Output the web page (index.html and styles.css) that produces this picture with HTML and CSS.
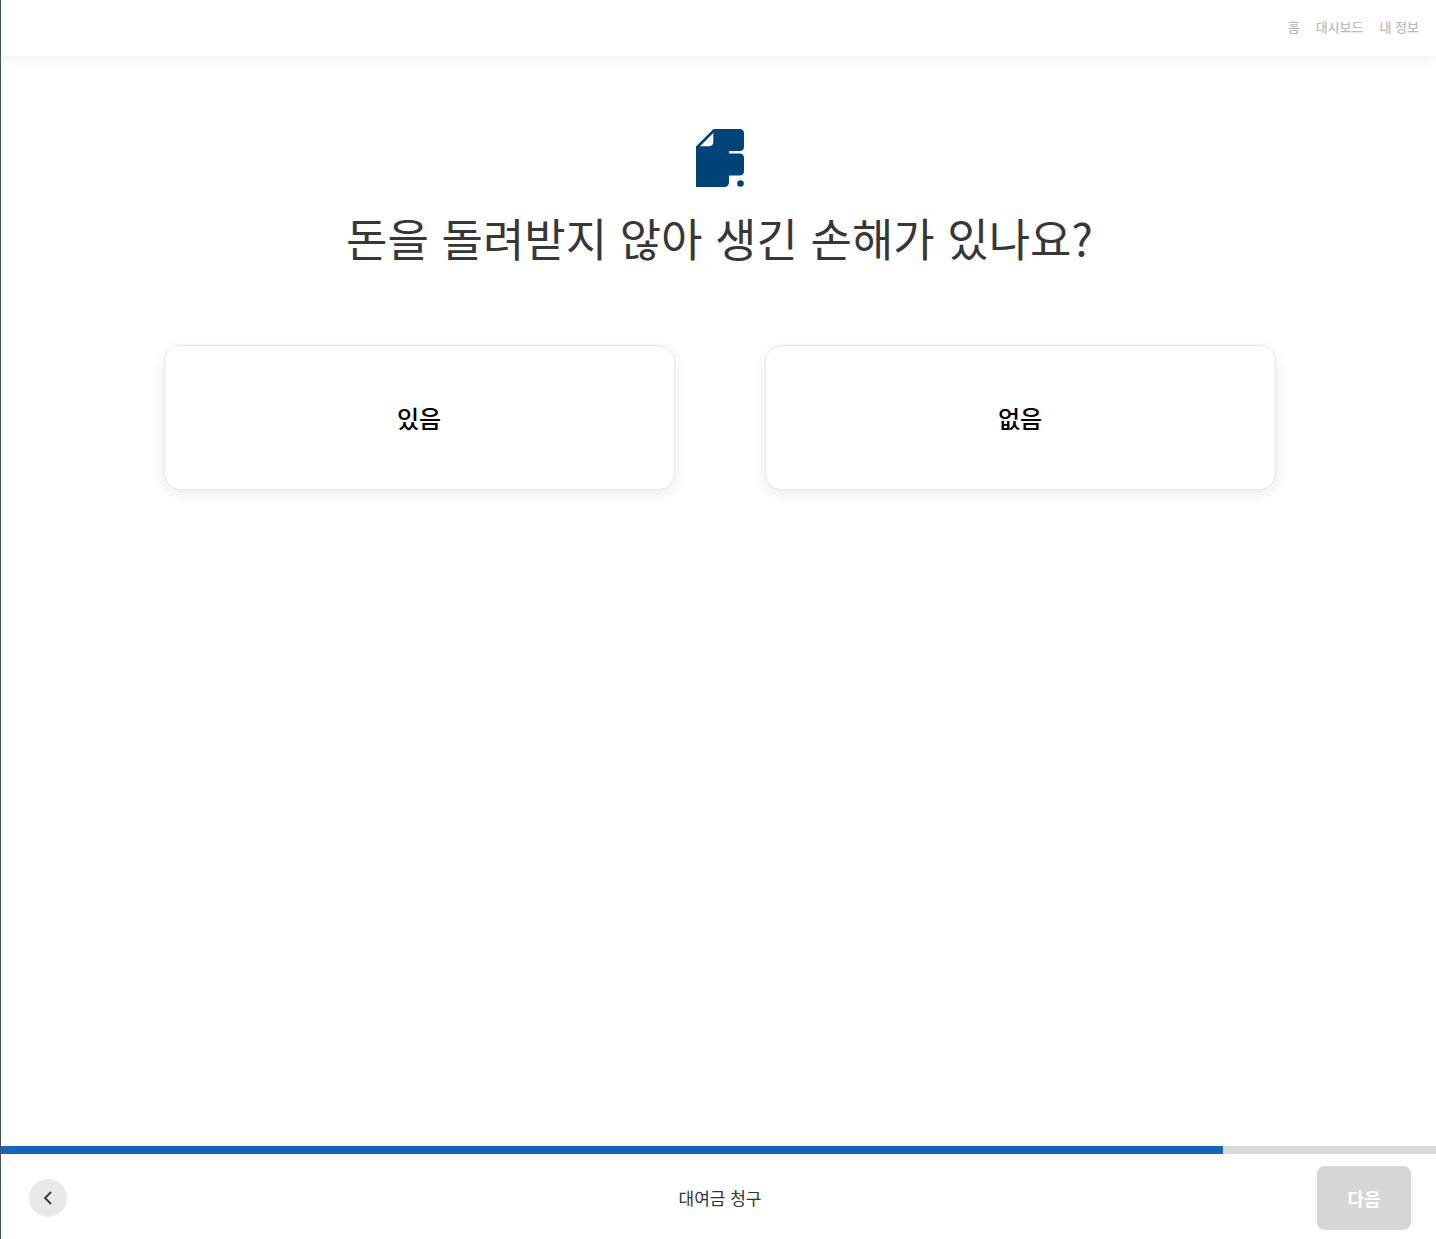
FILE: index.html
```html
<!DOCTYPE html>
<html lang="ko">
<head>
  <meta charset="utf-8">
  <meta name="viewport" content="width=device-width, initial-scale=1">
  <title>대여금 청구</title>
  <link rel="stylesheet" href="styles.css">
</head>
<body>
  <div class="page">
    <header class="topbar">
      <nav class="topbar-nav">
        <a href="#">홈</a>
        <a href="#">대시보드</a>
        <a href="#">내 정보</a>
      </nav>
    </header>

    <main class="question">
      <svg class="logo" viewBox="0 0 48 58" aria-hidden="true">
        <path fill="#004378" fill-rule="evenodd" d="M17.500 0H43.500Q48 0 48 4.500V17.500Q48 22 43.500 22H33V24.500H43.500Q48 24.500 48 29V42Q48 46.500 43.500 46.500H33V53Q33 58 28 58H0V17.500ZM17.300 4L4 17.300H12.500Q17.300 17.300 17.300 12.500Z"/>
        <circle fill="#004378" cx="44.500" cy="54.500" r="3.300"/>
      </svg>
      <h1 class="title">돈을 돌려받지 않아 생긴 손해가 있나요?</h1>
      <div class="choices">
        <button class="choice" type="button">있음</button>
        <button class="choice" type="button">없음</button>
      </div>
    </main>

    <footer class="footer">
      <div class="progress"><div class="progress-fill" style="width: 85.16%"></div></div>
      <div class="footer-bar">
        <button class="back" type="button" aria-label="이전">
          <svg class="back-icon" viewBox="0 0 16 16" aria-hidden="true">
            <path d="M11 2L5 8L11 14" fill="none" stroke="#333" stroke-width="1.800"/>
          </svg>
        </button>
        <span class="step">대여금 청구</span>
        <button class="next" type="button" disabled>다음</button>
      </div>
    </footer>
  </div>
</body>
</html>
```
FILE: styles.css
```css
* {
  box-sizing: border-box;
}

body {
  margin: 0;
  font-family: "Noto Sans CJK KR", sans-serif;
  color: #333;
  background: #fff;
}

button {
  font-family: inherit;
  border: 0;
  padding: 0;
  cursor: pointer;
}

.page {
  display: flex;
  flex-direction: column;
  min-height: 100vh;
  border-left: 1px solid #42536c;
}

.topbar {
  display: flex;
  align-items: center;
  justify-content: flex-end;
  height: 56px;
  padding: 0 17px 2px;
  box-shadow: 0 4px 10px rgba(0, 0, 0, 0.05);
}

.topbar-nav {
  display: flex;
  gap: 16px;
}

.topbar-nav a {
  font-size: 13px;
  line-height: 20px;
  font-weight: 500;
  color: #bbb;
  text-decoration: none;
}

.question {
  flex: 1;
  display: flex;
  flex-direction: column;
  align-items: center;
  padding: 73px 24px 48px 26px;
}

.logo {
  width: 48px;
  height: 58px;
}

.title {
  margin: 18px 0 74px;
  font-size: 45px;
  line-height: 66px;
  font-weight: 400;
  color: #373737;
  text-align: center;
}

.choices {
  display: grid;
  grid-template-columns: 1fr 1fr;
  gap: 90px;
  width: 100%;
  max-width: 1112px;
}

.choice {
  height: 145px;
  border: 1px solid #e8e8e8;
  border-radius: 16px;
  background: #fff;
  box-shadow: 0 4px 16px rgba(0, 0, 0, 0.08);
  color: #000;
  font-size: 24px;
  line-height: 36px;
  font-weight: 500;
}

.progress {
  height: 8px;
  background: #d9d9d9;
}

.progress-fill {
  height: 100%;
  background: #1565bd;
}

.footer-bar {
  display: grid;
  grid-template-columns: 1fr auto 1fr;
  align-items: center;
  padding: 12px 25px 9px 28px;
}

.back {
  display: flex;
  align-items: center;
  justify-content: center;
  width: 38px;
  height: 38px;
  border-radius: 50%;
  background: #e9e9e9;
}

.back-icon {
  width: 16px;
  height: 16px;
}

.step {
  font-size: 17px;
  line-height: 24px;
}

.next {
  justify-self: end;
  width: 94px;
  height: 64px;
  border-radius: 8px;
  background: #d6d6d6;
  color: #fff;
  font-size: 18px;
  line-height: 28px;
  font-weight: 700;
}
```
